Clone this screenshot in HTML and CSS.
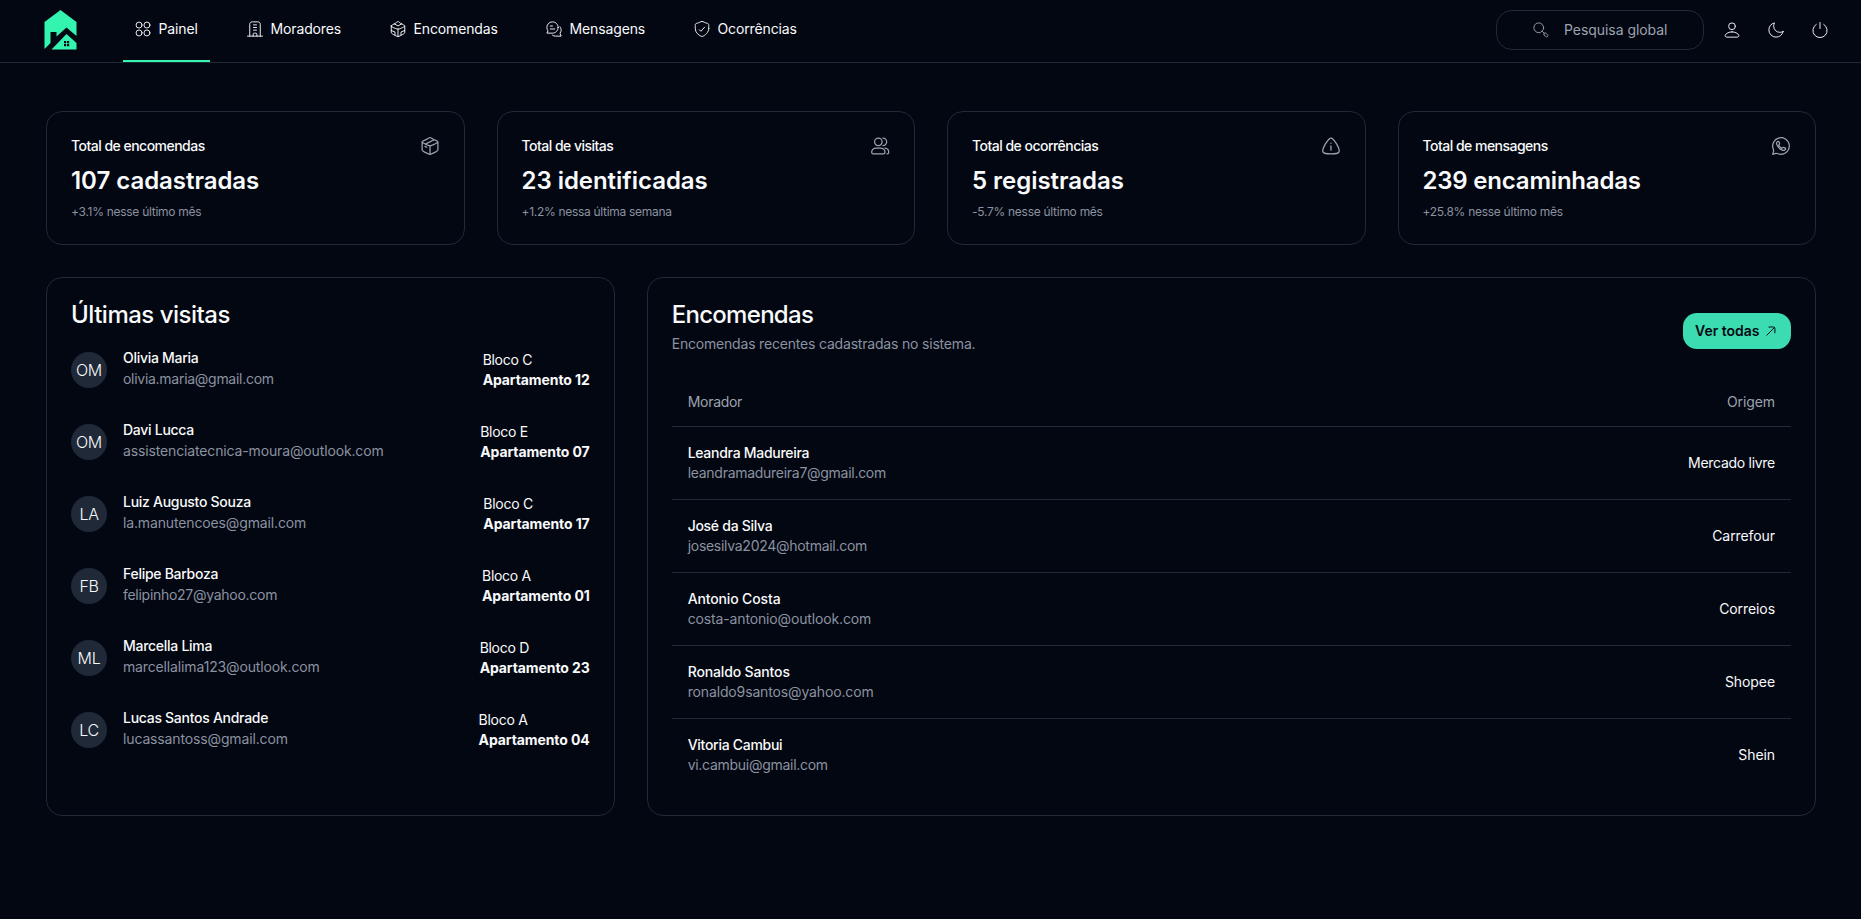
FILE: index.html
```html
<!DOCTYPE html>
<html lang="pt-BR">
<head>
<meta charset="utf-8">
<title>Painel</title>
<link rel="stylesheet" href="styles.css">
</head>
<body>
<header class="topbar">
  <svg class="logo" viewBox="0 0 33 40"><path fill="#34f5b0" d="M16.500 0 32.500 12V26L22.500 17.500 12.500 26.500V22H6.500V33L.500 39V12Z"/><path fill="#34f5b0" d="M22.500 24 32.500 33V39.500H7.500Z"/><path fill="#030712" d="M20 31h2.200v2.200H20zM23 31h2.200v2.200H23zM20 34h2.200v2.200H20zM23 34h2.200v2.200H23z"/></svg>
  <nav class="nav">
    <a class="nav-item active w-painel"><svg class="i18" viewBox="0 0 24 24"><circle cx="6.750" cy="6.750" r="4"/><circle cx="17.250" cy="6.750" r="4"/><circle cx="6.750" cy="17.250" r="4"/><circle cx="17.250" cy="17.250" r="4"/></svg><span>Painel</span></a>
    <a class="nav-item w-moradores"><svg class="i18" viewBox="0 0 24 24"><path d="M2 21.500h20M5 21.500V6c0-2.500 1-3.500 3.500-3.500h7C18 2.500 19 3.500 19 6v15.500M9.500 21.500v-2.500c0-1 .5-1.500 1.500-1.500h2c1 0 1.500.5 1.500 1.500v2.500M10 6.500h4M10 10h4M10 13.500h4"/></svg><span>Moradores</span></a>
    <a class="nav-item w-encomendas"><svg class="i18" viewBox="0 0 24 24"><path d="M12 22c-.8 0-1.600-.4-3.100-1.100C5 19 3 18 3 16.500V8M12 22c.8 0 1.600-.4 3.100-1.100C19 19 21 18 21 16.500V8M12 22V12M3 8c0 .7.900 1.100 2.600 2l2.700 1.200C10.100 12 11 12 12 12s1.900 0 3.700-.8l2.700-1.200C20.100 9.100 21 8.700 21 8s-.9-1.100-2.600-2l-2.700-1.400C13.900 3.500 13 2 12 2s-1.900 1.500-3.700 2.600L5.600 6C3.900 6.900 3 7.300 3 8ZM7 5l5 3 5-3M3 14l5 2v4M21 14l-5 2v4"/></svg><span>Encomendas</span></a>
    <a class="nav-item w-mensagens"><svg class="i18" viewBox="0 0 24 24"><path d="M17.500 10c0 4.300-3.300 7.500-7.500 7.500H2.500l1.500-3c-1-1.200-1.500-2.800-1.500-4.500C2.500 5.500 5.800 2.500 10 2.500s7.500 3.200 7.500 7.500ZM7 8h3M7 12h6M20 9c1 1.300 1.500 2.700 1.500 4.500 0 1.500-.5 3-1.500 4.200l1.500 3.800H14c-1.500 0-2.800-.4-4-1.200"/></svg><span>Mensagens</span></a>
    <a class="nav-item w-ocorrencias"><svg class="i18" viewBox="0 0 24 24"><path d="M21 11.200V8.400c0-1.700 0-2.600-.4-3.100-.4-.6-1.200-.8-2.800-1.200-1.100-.3-2-.7-2.800-1.100C13.900 2.300 13 2 12 2s-1.700.3-3 1c-.8.400-1.700.8-2.800 1.100-1.600.4-2.400.6-2.800 1.200C3 5.800 3 6.700 3 8.400v2.800c0 5.900 5.300 9.400 7.900 10.500.4.200.7.300 1.100.3s.7-.1 1.100-.3C15.700 20.600 21 17.100 21 11.200ZM8.500 13l2 2 5-5.500"/></svg><span>Ocorrências</span></a>
  </nav>
  <div class="search"><svg class="i18" viewBox="0 0 24 24"><circle cx="9" cy="9" r="6.500"/><path d="m14 14 2.500 2.500M16.300 18.700l2 2c.7.700 1.700.7 2.400 0s.7-1.700 0-2.400l-2-2c-.7-.7-1.700-.7-2.400 0s-.7 1.700 0 2.400Z"/></svg><span>Pesquisa global</span></div>
  <div class="actions">
    <svg class="i18" viewBox="0 0 24 24"><circle cx="12" cy="7" r="4.500"/><path d="M12 14.500c-2 0-4 .4-5.600 1.300C4.800 16.700 2.800 18 2.800 19.600c0 1 .8 1.900 2.400 1.900h13.600c1.600 0 2.400-.9 2.400-1.900 0-1.600-2-2.900-3.600-3.800-1.600-.9-3.600-1.300-5.600-1.300Z"/></svg>
    <svg class="i18" viewBox="0 0 24 24"><path d="M21.500 14.100c-1.300.7-2.800 1-4.400 1A8.200 8.200 0 0 1 8.900 6.900c0-1.600.4-3.100 1-4.400C5.500 3.500 2.500 7.400 2.500 11.900a9.600 9.600 0 0 0 9.600 9.600c4.500 0 8.400-3 9.400-7.400Z"/></svg>
    <svg class="i18" viewBox="0 0 24 24"><path d="M7 4.500a9.500 9.500 0 1 0 10 0M12 2v8"/></svg>
  </div>
</header>
<main class="content">
  <section class="stats">
    <article class="card stat"><div class="stat-head"><h3>Total de encomendas</h3><svg class="i20" viewBox="0 0 24 24"><path d="M12 22c-.8 0-1.600-.3-3-1-4-1.900-6.500-2.800-6.500-4.500V7M12 22c.8 0 1.600-.3 3-1 4-1.900 6.500-2.800 6.500-4.500V7M12 22V11.500M2.500 7c0 .9 1.500 1.500 4 2.700l2 .9c1.800.6 2.500.9 3.500.9s1.700-.3 3.500-.9l2-.9c2.500-1.200 4-1.800 4-2.700s-1.500-1.400-4-2.400l-2-.9C13.700 2.300 13 2 12 2s-1.700.3-3.500 1.700l-2 .9C4 5.600 2.500 6.100 2.500 7ZM6 12.500l2 1M17 4.500 7 9.500"/></svg></div><p class="value">107 cadastradas</p><p class="trend">+3.1% nesse último mês</p></article>
    <article class="card stat"><div class="stat-head"><h3>Total de visitas</h3><svg class="i20" viewBox="0 0 24 24"><circle cx="10" cy="7" r="4.500"/><path d="M15.500 2.500a4.500 4.500 0 0 1 0 9M12.500 14.500h-5c-3 0-5.500 2-5.500 5 0 1.200 1 2 2 2h12c1 0 2-.8 2-2 0-3-2.500-5-5.500-5ZM18 14.500c2.500.3 4.500 2.500 4.500 5 0 1.200-.8 2-2 2"/></svg></div><p class="value">23 identificadas</p><p class="trend wide">+1.2% nessa última semana</p></article>
    <article class="card stat"><div class="stat-head"><h3>Total de ocorrências</h3><svg class="i20" viewBox="0 0 24 24"><path d="M5.300 9.500C8.200 5 9.600 2.500 12 2.500S15.800 5 18.700 9.500c2.500 4.500 4 7 3 9.500-1 2.500-4 2.500-9.700 2.500s-8.700 0-9.700-2.500c-1-2.500.5-5 3-9.500ZM11.500 12h.5v5M12 8.500v.3"/></svg></div><p class="value">5 registradas</p><p class="trend">-5.7% nesse último mês</p></article>
    <article class="card stat"><div class="stat-head"><h3>Total de mensagens</h3><svg class="i20" viewBox="0 0 24 24"><path d="M12 22a10 10 0 1 0-9-5.600c.3.700.3 1 .1 1.700L2 22l3.900-1.100c.7-.2 1-.1 1.700.1 1.400.7 2.800 1 4.400 1ZM12.900 14.800c-1.500-.9-2.800-2.200-3.700-3.700l.7-1c.5-.6.500-1.100.2-1.900L9.500 6.900c-.4-.5-1-.5-1.500-.2-1 .6-1.600 1.600-1.200 3 1.100 3.700 3.800 6.400 7.500 7.500 1.400.4 2.400-.2 3-1.200.3-.5.300-1.100-.2-1.500l-1.300-.6c-.8-.3-1.300-.3-1.900.2Z"/></svg></div><p class="value long">239 encaminhadas</p><p class="trend">+25.8% nesse último mês</p></article>
  </section>
  <section class="panels">
    <article class="card visits">
      <h2>Últimas visitas</h2>
      <ul>
        <li><i class="avatar">OM</i><div class="who"><b>Olivia Maria</b><span>olivia.maria@gmail.com</span></div><div class="unit"><span>Bloco C</span><b>Apartamento 12</b></div></li>
        <li><i class="avatar">OM</i><div class="who"><b>Davi Lucca</b><span class="loose">assistenciatecnica-moura@outlook.com</span></div><div class="unit"><span>Bloco E</span><b>Apartamento 07</b></div></li>
        <li><i class="avatar">LA</i><div class="who"><b>Luiz Augusto Souza</b><span class="loose">la.manutencoes@gmail.com</span></div><div class="unit"><span>Bloco C</span><b>Apartamento 17</b></div></li>
        <li><i class="avatar">FB</i><div class="who"><b>Felipe Barboza</b><span>felipinho27@yahoo.com</span></div><div class="unit"><span>Bloco A</span><b>Apartamento 01</b></div></li>
        <li><i class="avatar">ML</i><div class="who"><b>Marcella Lima</b><span class="loose">marcellalima123@outlook.com</span></div><div class="unit"><span>Bloco D</span><b>Apartamento 23</b></div></li>
        <li><i class="avatar">LC</i><div class="who"><b>Lucas Santos Andrade</b><span class="loose">lucassantoss@gmail.com</span></div><div class="unit"><span>Bloco A</span><b>Apartamento 04</b></div></li>
      </ul>
    </article>
    <article class="card orders">
      <div class="orders-head">
        <div><h2 class="tight">Encomendas</h2><p class="desc">Encomendas recentes cadastradas no sistema.</p></div>
        <a class="button"><span>Ver todas</span><svg viewBox="0 0 16 16"><path d="M3.800 12.200 11.600 4.400M6 4.100c3-.3 4.900-.2 5.500.3s.6 2.500.3 5.500"/></svg></a>
      </div>
      <div class="row head"><span>Morador</span><span class="origin">Origem</span></div>
      <div class="row"><div class="who"><b>Leandra Madureira</b><span>leandramadureira7@gmail.com</span></div><span>Mercado livre</span></div>
      <div class="row"><div class="who"><b>José da Silva</b><span>josesilva2024@hotmail.com</span></div><span class="origin">Carrefour</span></div>
      <div class="row"><div class="who"><b class="loose">Antonio Costa</b><span class="loose">costa-antonio@outlook.com</span></div><span class="origin">Correios</span></div>
      <div class="row"><div class="who"><b class="loose">Ronaldo Santos</b><span class="loose">ronaldo9santos@yahoo.com</span></div><span class="origin">Shopee</span></div>
      <div class="row"><div class="who"><b>Vitoria Cambui</b><span>vi.cambui@gmail.com</span></div><span class="origin">Shein</span></div>
    </article>
  </section>
</main>
</body>
</html>
```
FILE: styles.css
```css
* { box-sizing: border-box; margin: 0; padding: 0; }
body { min-height: 919px; background: #030712; color: #f9fafb; font: 400 14px/20px Inter, "Liberation Sans", sans-serif; letter-spacing: -.28px; white-space: nowrap; }
svg { display: block; flex: none; fill: none; stroke: currentColor; stroke-width: 1.5; stroke-linecap: round; stroke-linejoin: round; }
b { font-weight: 500; }
ul { list-style: none; }
.i18 { width: 18px; height: 18px; stroke-width: 1.25; }
.i20 { width: 20px; height: 20px; color: #9ca3af; }
.who .loose { letter-spacing: -.14px; }

.topbar { display: flex; height: 63px; padding: 0 32px 0 43.5px; border-bottom: 1px solid #1f2937; }
.logo { width: 33px; height: 40px; margin-top: 10px; stroke: none; }
.nav { display: flex; margin-left: 46.5px; letter-spacing: -.13px; }
.nav-item { display: flex; gap: 6px; height: 62px; padding: 19px 0 0 11px; }
.nav-item span { margin-left: .5px; }
.nav-item .i18 { margin-top: 1px; }
.active { border-bottom: 2px solid #34f5b0; }
.w-painel { width: 87px; margin-right: 25px; }
.w-moradores { width: 118px; margin-right: 25px; }
.w-encomendas { width: 132px; margin-right: 24px; }
.w-mensagens { width: 124px; margin-right: 24px; }
.search { display: flex; align-items: center; gap: 14px; width: 208px; height: 40px; margin: 10px 19px 0 auto; padding-left: 35px; border: 1px solid #1f2937; border-radius: 16px; color: #9ca3af; letter-spacing: -.05px; }
.actions { display: flex; gap: 26px; margin-top: 21px; }

.content { padding: 48px 45px 0 46px; }
.card { border: 1px solid #1f2937; border-radius: 16px; padding: 24px; }
.stats { display: grid; grid-template-columns: repeat(4, 1fr); gap: 32px; }
.stat { height: 134px; }
.stat-head { display: flex; justify-content: space-between; }
h3 { font-size: 14px; font-weight: 500; letter-spacing: -.52px; }
.value { margin-top: 9px; font-size: 24px; line-height: 32px; font-weight: 600; letter-spacing: -.04px; }
.value.long { letter-spacing: -.2px; }
.trend { margin-top: 7px; font-size: 12px; line-height: 16px; color: #8b92a0; }
.trend.wide { letter-spacing: -.3px; }

.panels { display: grid; grid-template-columns: repeat(3, 1fr); gap: 32px; margin-top: 32px; }
.card.visits, .card.orders { height: 539px; }
.orders { grid-column: span 2; }
h2 { padding-top: 1px; font-size: 24px; height: 24px; line-height: 24px; font-weight: 500; letter-spacing: -.5px; }
h2.tight { letter-spacing: -.7px; }
.visits ul { display: grid; gap: 32px; margin-top: 24px; }
.visits li { display: flex; align-items: center; height: 40px; }
.avatar { width: 36px; height: 36px; margin-right: 16px; border-radius: 50%; background: #1f2937; font-size: 16px; font-style: normal; font-weight: 300; line-height: 36px; text-align: center; }
.who { display: grid; }
.who span { color: #8b92a0; }
.visits .who { gap: 4px; }
.visits .who b { line-height: 14px; }
.unit { display: grid; margin-left: auto; }
.unit b { font-weight: 700; letter-spacing: -.1px; }

.orders-head { display: flex; justify-content: space-between; height: 76px; }
.desc { margin-top: 8px; color: #8b92a0; letter-spacing: -.19px; }
.button { display: flex; align-items: center; justify-content: space-between; width: 108px; height: 36px; margin-top: 11px; padding: 0 12px; border-radius: 14px; background: #3bdcb0; color: #030712; font-weight: 600; letter-spacing: 0; }
.button svg { width: 16px; height: 16px; stroke-width: 1; }
.row { display: flex; align-items: center; justify-content: space-between; height: 73px; padding: 0 16px; border-bottom: 1px solid #1f2937; }
.row.head { height: 49px; color: #9ca3af; }
.origin { letter-spacing: -.08px; }
.row:last-child { height: 72px; border-bottom: 0; }
```
